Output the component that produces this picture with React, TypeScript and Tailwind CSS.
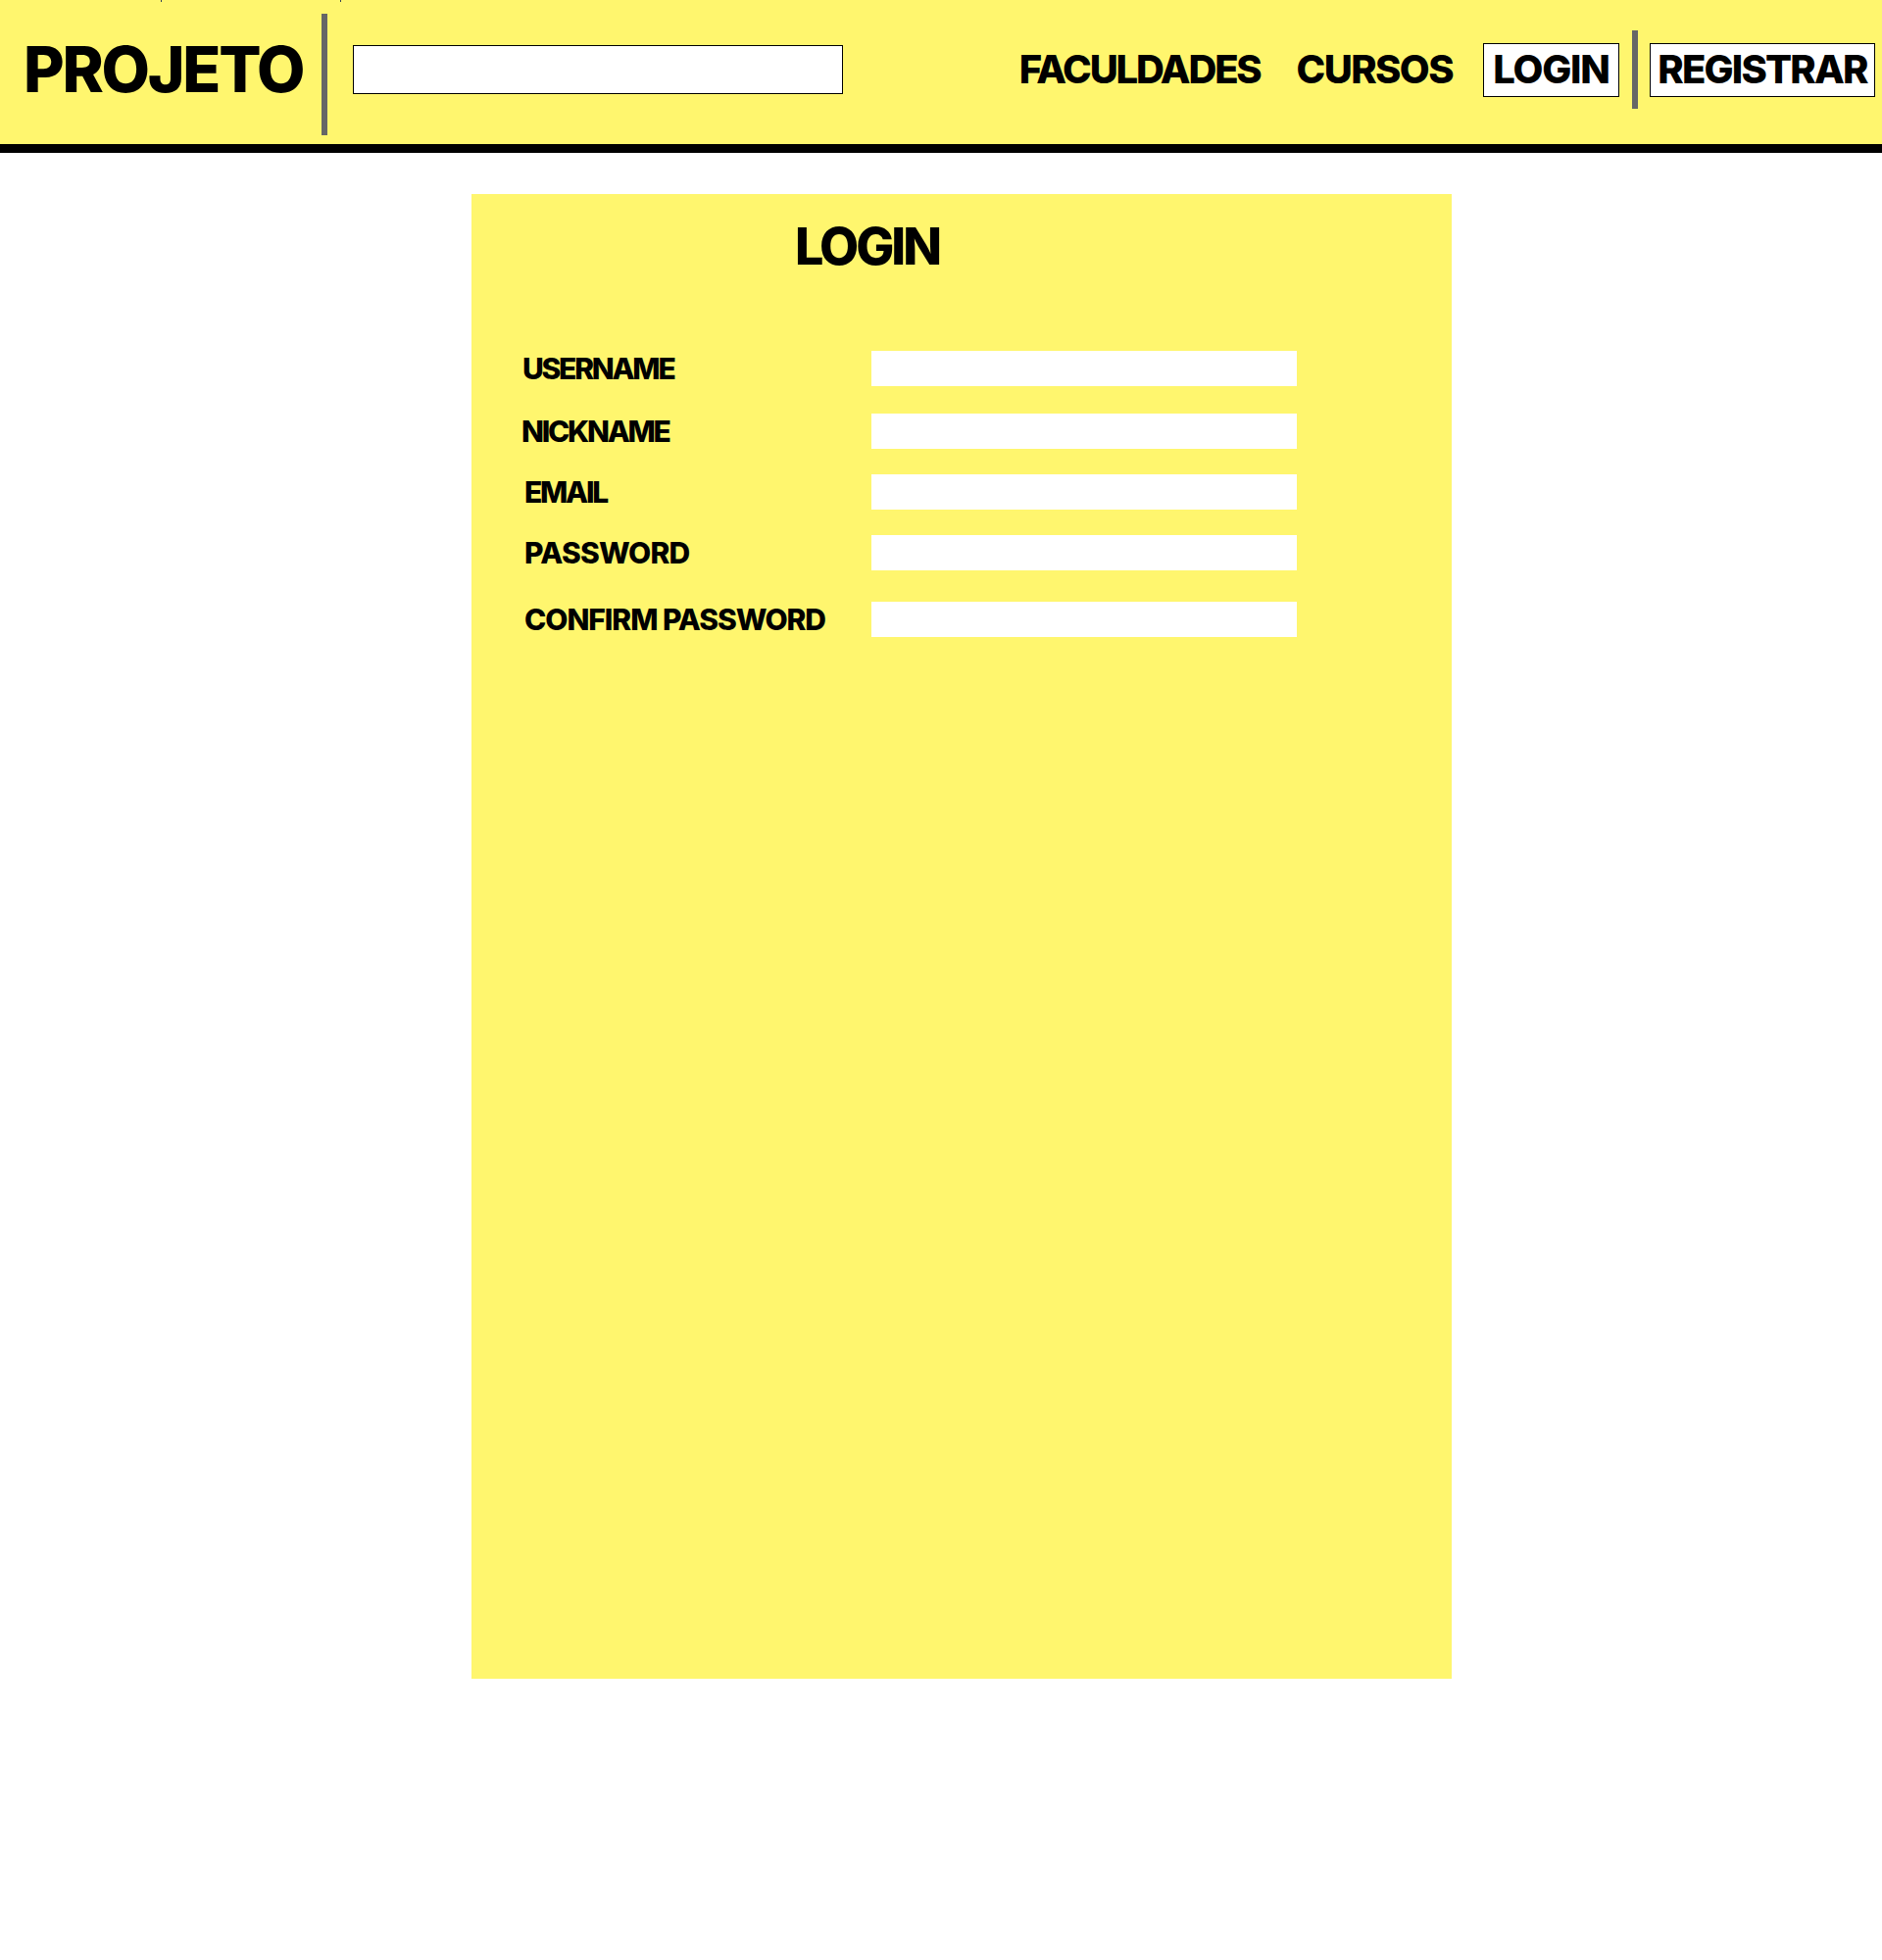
import React from "react"

const font = { fontFamily: "Inter, 'Noto Sans', sans-serif" }

const fields = [
  { label: "USERNAME", mt: "mt-0", shift: "pl-[52px] tracking-[-0.075em]" },
  { label: "NICKNAME", mt: "mt-[28px]", shift: "pl-[51px] tracking-[-0.075em]" },
  { label: "EMAIL", mt: "mt-[26px]", shift: "pl-[54px] tracking-[-0.075em]" },
  { label: "PASSWORD", mt: "mt-[26px]", shift: "pl-[54px] tracking-[-0.025em]" },
  { label: "CONFIRM PASSWORD", mt: "mt-[32px]", shift: "pl-[54px] tracking-[-0.035em]" },
]

function Header() {
  return (
    <header className="relative flex h-[156px] items-start border-b-[9px] border-black bg-[#fff66e]">
      <span className="absolute left-[164px] top-0 h-[2px] w-px bg-gray-700" />
      <span className="absolute left-[347px] top-0 h-[2px] w-px bg-gray-700" />

      <div className="w-[328px] shrink-0 pl-[24px] pt-[39px]">
        <h1 className="text-[64px] font-extrabold leading-none tracking-[-0.035em] text-black">PROJETO</h1>
      </div>
      <div className="mt-[14px] h-[124px] w-[6px] shrink-0 bg-[#666666]" />
      <input type="text" className="ml-[26px] mt-[46px] h-[50px] w-[500px] shrink-0 border border-black bg-white outline-none" />

      <nav className="ml-auto mr-[7px] mt-[31px] flex items-center">
        <a className="text-[40px] font-extrabold leading-none tracking-[-0.055em] text-black">FACULDADES</a>
        <a className="ml-[37px] text-[40px] font-extrabold leading-none tracking-[-0.04em] text-black">CURSOS</a>
        <a className="ml-[31px] flex h-[55px] w-[139px] items-center justify-center border border-black bg-white text-[40px] font-extrabold leading-none tracking-[-0.03em] text-black">
          LOGIN
        </a>
        <div className="ml-[13px] h-[80px] w-[6px] bg-[#666666]" />
        <a className="ml-[12px] flex h-[55px] w-[230px] items-center justify-center border border-black bg-white text-[40px] font-extrabold leading-none tracking-[-0.045em] text-black">
          REGISTRAR
        </a>
      </nav>
    </header>
  )
}

function LoginCard() {
  return (
    <section className="ml-[481px] mt-[42px] h-[1515px] w-[1000px] bg-[#fff66e]">
      <h2 className="pl-[330px] pt-[28px] text-[52px] font-extrabold leading-none tracking-[-0.057em] text-black">LOGIN</h2>
      <form className="mt-[80px] flex flex-col">
        {fields.map((f) => (
          <div key={f.label} className={`flex items-center ${f.mt}`}>
            <label className={`w-[408px] shrink-0 whitespace-nowrap text-[30px] font-extrabold leading-none text-black ${f.shift}`}>
              {f.label}
            </label>
            <input
              type={f.label.includes("PASSWORD") ? "password" : "text"}
              className="h-[36px] w-[434px] bg-white outline-none"
            />
          </div>
        ))}
      </form>
    </section>
  )
}

export default function App() {
  return (
    <div className="min-h-[2000px] bg-white" style={font}>
      <Header />
      <LoginCard />
    </div>
  )
}
